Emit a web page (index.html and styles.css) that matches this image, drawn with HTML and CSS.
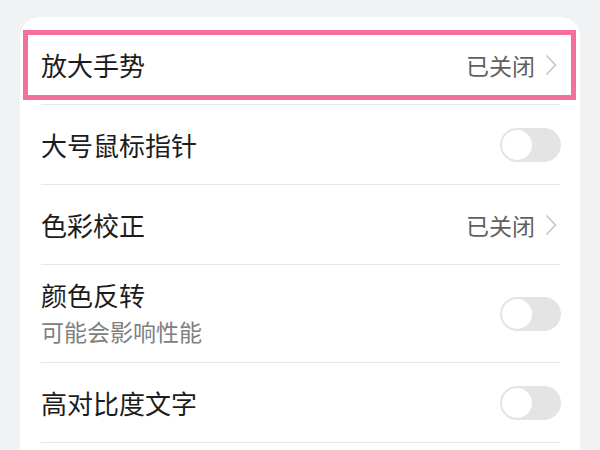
FILE: index.html
```html
<!DOCTYPE html>
<html lang="zh-CN">
<head>
<meta charset="UTF-8">
<meta name="viewport" content="width=device-width, initial-scale=1.0">
<title>辅助功能</title>
<link rel="stylesheet" href="styles.css">
</head>
<body>
<div class="card">
  <div class="highlight"></div>
  <div class="row">
    <span class="title">放大手势</span>
    <span class="value">已关闭</span>
    <svg class="chevron" width="12" height="22" viewBox="0 0 12 22"><path d="M1.5 1.5 L10.5 11 L1.5 20.5" fill="none" stroke="#c6c6c6" stroke-width="1.6"/></svg>
  </div>
  <div class="row">
    <span class="title">大号鼠标指针</span>
    <span class="toggle"><span class="knob"></span></span>
  </div>
  <div class="row">
    <span class="title">色彩校正</span>
    <span class="value">已关闭</span>
    <svg class="chevron" width="12" height="22" viewBox="0 0 12 22"><path d="M1.5 1.5 L10.5 11 L1.5 20.5" fill="none" stroke="#c6c6c6" stroke-width="1.6"/></svg>
  </div>
  <div class="row tall">
    <div class="text">
      <span class="title">颜色反转</span>
      <span class="sub">可能会影响性能</span>
    </div>
    <span class="toggle"><span class="knob"></span></span>
  </div>
  <div class="row">
    <span class="title">高对比度文字</span>
    <span class="toggle"><span class="knob"></span></span>
  </div>
</div>
</body>
</html>
```

FILE: styles.css
```css
body {
  margin: 0;
  background: #f1f2f4;
  font-family: "Noto Sans CJK SC", "Noto Sans", sans-serif;
}

.card {
  position: relative;
  margin: 17px 20px 0 20px;
  padding: 8px 20px 0 21px;
  background: #fff;
  border-radius: 20px 20px 0 0;
  height: 440px;
  box-sizing: border-box;
}

.highlight {
  position: absolute;
  left: 3px;
  top: 13px;
  width: 553px;
  height: 70px;
  border: 5px solid #f4709a;
  box-sizing: border-box;
}

.row {
  display: flex;
  align-items: center;
  height: 80px;
  box-sizing: border-box;
  border-bottom: 1px solid #e6e6e6;
}

.row.tall {
  height: 98px;
}

.title {
  flex: 1;
  font-size: 26px;
  color: #1c1c1c;
  line-height: 1.3;
}

.text {
  flex: 1;
  display: flex;
  flex-direction: column;
  gap: 5px;
  margin-top: -2px;
}

.sub {
  font-size: 23px;
  color: #808080;
  line-height: 1.3;
}

.value {
  font-size: 23px;
  color: #5f5f5f;
  margin-right: 10px;
}

.chevron {
  margin-right: 3px;
}

.toggle {
  display: flex;
  align-items: center;
  width: 61px;
  height: 34px;
  padding: 2px;
  box-sizing: border-box;
  border-radius: 17px;
  background: #e4e4e4;
  margin-right: -1px;
}

.knob {
  width: 30px;
  height: 30px;
  border-radius: 50%;
  background: #fff;
}
```
